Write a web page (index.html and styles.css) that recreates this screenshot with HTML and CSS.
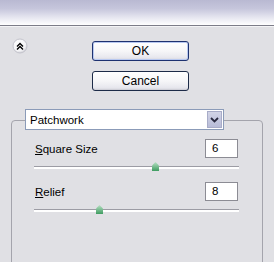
FILE: index.html
```html
<!DOCTYPE html>
<html>
<head>
<meta charset="utf-8">
<link rel="stylesheet" href="styles.css">
</head>
<body>
<div class="header"></div>
<div class="top">
  <div class="toggle">
    <svg width="16" height="16" viewBox="0 0 16 16">
      <defs>
        <radialGradient id="tg" cx="0.4" cy="0.35" r="0.7">
          <stop offset="0" stop-color="#ffffff"/>
          <stop offset="0.7" stop-color="#f4f4f6"/>
          <stop offset="1" stop-color="#c8c8d0"/>
        </radialGradient>
      </defs>
      <circle cx="8" cy="8" r="7" fill="url(#tg)" stroke="#c4c4cc" stroke-width="1"/>
      <path d="M5 8.5 L8 5.5 L11 8.5 M5 11.5 L8 8.5 L11 11.5" fill="none" stroke="#000" stroke-width="1.4"/>
    </svg>
  </div>
  <div class="buttons">
    <button class="btn btn-default">OK</button>
    <button class="btn">Cancel</button>
  </div>
</div>
<div class="group">
  <div class="select">
    <span class="select-text">Patchwork</span>
    <span class="select-btn">
      <svg width="9" height="6" viewBox="0 0 9 6"><path d="M1 1 L4.5 4.5 L8 1" fill="none" stroke="#2a2a40" stroke-width="1.8"/></svg>
    </span>
  </div>
  <div class="param">
    <div class="param-row">
      <span class="label"><u>S</u>quare Size</span>
      <span class="field">6</span>
    </div>
    <div class="slider"><span class="thumb" style="left:118px"></span></div>
  </div>
  <div class="param">
    <div class="param-row">
      <span class="label"><u>R</u>elief</span>
      <span class="field">8</span>
    </div>
    <div class="slider"><span class="thumb" style="left:62px"></span></div>
  </div>
</div>
</body>
</html>
```
FILE: styles.css
```css
html, body {
  margin: 0;
  padding: 0;
}
body {
  width: 274px;
  height: 262px;
  overflow: hidden;
  background: #e0e0e4;
  font-family: "Liberation Sans", Arial, sans-serif;
  font-size: 11px;
  color: #000;
}
.header {
  height: 25px;
  background: linear-gradient(to bottom, #b9b9d2 0%, #c6c6dc 35%, #e6e6f0 70%, #ffffff 100%);
  border-bottom: 1px solid #7c7c88;
  box-shadow: 0 1px 0 #f4f4f6;
}
.top {
  display: flex;
  padding: 15px 0 0 12px;
}
.toggle {
  width: 16px;
  height: 16px;
  margin-top: -3px;
}
.buttons {
  display: flex;
  flex-direction: column;
  gap: 10px;
  margin-left: 64px;
}
.btn {
  box-sizing: border-box;
  width: 97px;
  height: 20px;
  padding: 0;
  font-family: "Liberation Sans", Arial, sans-serif;
  font-size: 12px;
  color: #000;
  border: 1px solid #1d2b48;
  border-radius: 3px;
  background: linear-gradient(to bottom, #ffffff 0%, #f6f6f8 50%, #e8e8ee 85%, #d6d6de 100%);
  box-shadow: inset 0 -1px 0 #d0d0d8;
}
.btn-default {
  border-color: #1e3270;
  box-shadow: inset 0 0 0 1px #b8c8f0, inset 0 -1px 0 #c0cce8;
}
.group {
  box-sizing: border-box;
  margin: 29px 0 0 11px;
  width: 252px;
  height: 150px;
  border: 1px solid #a4a4ac;
  border-radius: 4px;
  padding: 0 24px 0 13px;
}
.select {
  box-sizing: border-box;
  display: flex;
  align-items: center;
  width: 199px;
  height: 21px;
  margin-top: -12px;
  background: #fff;
  border: 1px solid #8b9bb8;
  padding: 1px;
}
.select-text {
  flex: 1;
  padding-left: 3px;
  font-size: 11.5px;
}
.select-btn {
  box-sizing: border-box;
  width: 15px;
  height: 17px;
  display: flex;
  align-items: center;
  justify-content: center;
  background: linear-gradient(to bottom, #d2d4e6, #b8bcd8);
  border: 1px solid #a8acc8;
}
.param {
  padding-left: 10px;
}
.param-row {
  display: flex;
  align-items: center;
  justify-content: space-between;
  margin-top: 9px;
}
.param + .param .param-row {
  margin-top: 13px;
}
.label {
  font-size: 11.5px;
  color: #000;
}
.field {
  box-sizing: border-box;
  width: 33px;
  height: 19px;
  background: #fff;
  border: 1px solid #8c8c94;
  padding: 2px 0 0 6px;
  font-size: 11.5px;
}
.slider {
  position: relative;
  margin-top: 8px;
  margin-left: -1px;
  width: 205px;
  height: 1px;
  border-top: 1px solid #9c9ca4;
  background: #fff;
  border-bottom: 1px solid #fff;
}
.thumb {
  position: absolute;
  top: -5px;
  width: 7px;
  height: 9px;
  background: linear-gradient(to bottom, #b8e0c4, #3e9c60);
  clip-path: polygon(50% 0, 100% 40%, 100% 100%, 0 100%, 0 40%);
}
```
